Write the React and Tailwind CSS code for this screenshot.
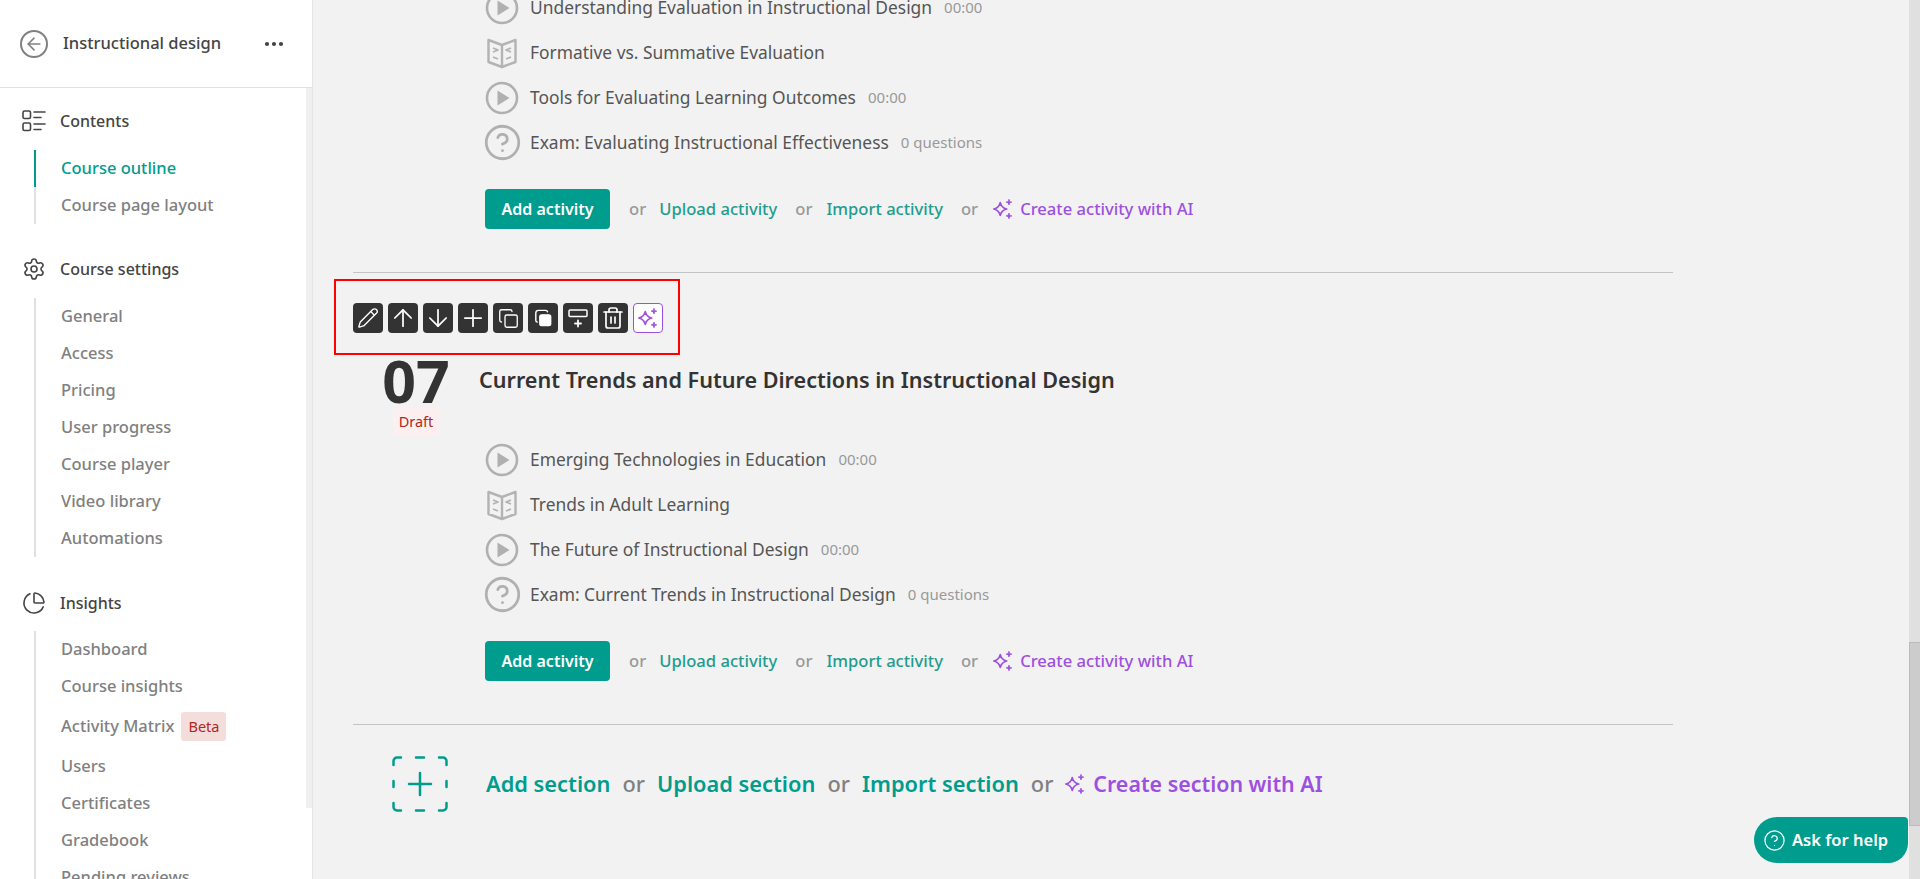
import React from 'react';
import { ArrowUp, ArrowDown, Plus, Pencil, Copy, Trash2, Settings, CircleHelp, ArrowLeft, Ellipsis, ChartPie } from 'lucide-react';

const FONT = 'font-["Noto_Sans",sans-serif]';

const Sparkles = ({ className }) => (
  <svg viewBox="0 0 24 24" className={className} fill="none" stroke="currentColor" strokeWidth="1.9" strokeLinejoin="round">
    <path d="M9 5c1 4.300 2.700 6 7 7-4.300 1-6 2.700-7 7-1-4.300-2.700-6-7-7 4.300-1 6-2.700 7-7z" />
    <path d="M18.500 1.500c.4 1.900 1.100 2.600 3 3-1.900.4-2.600 1.100-3 3-.4-1.900-1.100-2.600-3-3 1.900-.4 2.600-1.100 3-3z" fill="currentColor" strokeWidth="1" />
    <path d="M18.500 16.500c.4 1.900 1.100 2.600 3 3-1.900.4-2.600 1.100-3 3-.4-1.900-1.100-2.600-3-3 1.900-.4 2.600-1.100 3-3z" fill="currentColor" strokeWidth="1" />
  </svg>
);

const ContentsIcon = () => (
  <svg viewBox="0 0 24 24" className="w-6 h-6 text-[#444]" fill="none" stroke="currentColor" strokeWidth="1.6" strokeLinecap="round">
    <rect x="1" y="2" width="7.500" height="7.500" rx="1.500" />
    <rect x="1" y="14" width="7.500" height="7.500" rx="1.500" />
    <path d="M12 3h11M12 8.500h7M12 15h11M12 20.500h7" />
  </svg>
);

const BookIcon = () => (
  <svg viewBox="0 0 32 32" className="w-8 h-8 text-[#b3b3b3]" fill="none" stroke="currentColor" strokeWidth="2.400" strokeLinejoin="round">
    <path d="M16 8 2.500 3v22L16 30l13.500-5V3L16 8zM16 8v22" />
    <path d="m7 11 5 2-5 2M7 20l5 2M25 11l-5 2 5 2M25 20l-5 2" strokeWidth="1.800" />
  </svg>
);

const PlayIcon = () => (
  <svg viewBox="0 0 34 34" className="w-[34px] h-[34px] text-[#b0b0b0]" fill="none" stroke="currentColor" strokeWidth="2.600">
    <circle cx="17" cy="17" r="15" />
    <path d="M12.500 9.500v15l12-7.500z" fill="currentColor" strokeWidth="0" />
  </svg>
);

const DashedAdd = () => (
  <svg viewBox="0 0 56 56" className="w-14 h-14 text-[#009c8d]" fill="none" stroke="currentColor" strokeWidth="2.500" strokeLinecap="round">
    <path d="M1.500 9V5a3.500 3.500 0 0 1 3.500-3.500h4M47 1.500h4A3.500 3.500 0 0 1 54.500 5v4M54.500 47v4a3.500 3.500 0 0 1-3.500 3.500h-4M9 54.500H5A3.500 3.500 0 0 1 1.500 51v-4" />
    <path d="M24 1.500h8M24 54.500h8M1.500 25v6M54.500 25v6M28 17v22M17 28h22" />
  </svg>
);

const SideHeading = ({ icon, label }) => (
  <div className="flex items-center gap-3.5 h-7 pl-[22px] text-[16px] font-medium text-[#444]">
    <span className="flex w-6 justify-center">{icon}</span>
    {label}
  </div>
);

const SideLink = ({ label, active }) => (
  <div className={`flex items-center h-[37px] pl-[25px] border-l-2 text-[16.500px] font-medium ${active ? 'border-[#009c8d] text-[#009c8d]' : 'border-[#e0e0e0] text-[#808080]'}`}>
    {label}
  </div>
);

const Sidebar = () => (
  <aside className="w-[313px] shrink-0 h-full bg-white border-r border-[#e4e4e4] overflow-hidden flex flex-col">
    <div className="h-[88px] shrink-0 flex items-center pl-[20px] pr-[26px] border-b border-[#e0e0e0]">
      <span className="flex w-[28px] h-[28px] items-center justify-center rounded-full border-2 border-[#808080] text-[#808080]">
        <ArrowLeft className="w-[20px] h-[20px]" strokeWidth={1.900} />
      </span>
      <span className="ml-[15px] text-[16.500px] font-medium text-[#444]">Instructional design</span>
      <Ellipsis className="ml-auto w-6 h-6 text-[#444]" strokeWidth={2.200} />
    </div>
    <div className="flex-1 relative pt-[19px]">
      <div className="absolute right-0 top-0 w-[6px] h-[720px] bg-[#f0f0f0]" />
      <SideHeading icon={<ContentsIcon />} label="Contents" />
      <div className="ml-[34px] mt-[15px]">
        <SideLink label="Course outline" active />
        <SideLink label="Course page layout" />
      </div>
      <div className="mt-[31px]"><SideHeading icon={<Settings className="w-6 h-6" strokeWidth={1.600} />} label="Course settings" /></div>
      <div className="ml-[34px] mt-[15px]">
        {['General', 'Access', 'Pricing', 'User progress', 'Course player', 'Video library', 'Automations'].map((l) => <SideLink key={l} label={l} />)}
      </div>
      <div className="mt-[32px]"><SideHeading icon={<ChartPie className="w-6 h-6" strokeWidth={1.600} />} label="Insights" /></div>
      <div className="ml-[34px] mt-[14px]">
        <SideLink label="Dashboard" />
        <SideLink label="Course insights" />
        <div className="h-[43px] flex items-center pl-[25px] border-l-2 border-[#e0e0e0] text-[16.500px] font-medium text-[#808080]">
          Activity Matrix
          <span className="ml-[7px] px-[7px] h-[29px] flex items-center rounded-[3px] bg-[#f3dedc] text-[#b3261e] text-[14.500px] font-normal">Beta</span>
        </div>
        <SideLink label="Users" />
        <SideLink label="Certificates" />
        <SideLink label="Gradebook" />
        <SideLink label="Pending reviews" />
      </div>
    </div>
  </aside>
);

const Row = ({ type, title, meta }) => (
  <div className="flex items-center h-[45px]">
    <span className="flex w-[34px] h-[34px] shrink-0 items-center justify-center">
      {type === 'video' && <PlayIcon />}
      {type === 'book' && <BookIcon />}
      {type === 'exam' && <CircleHelp className="w-[39px] h-[39px] shrink-0 text-[#b0b0b0]" strokeWidth={1.700} />}
    </span>
    <span className="ml-[11px] text-[17.400px] text-[#555]">{title}</span>
    {meta && <span className="ml-[12px] text-[15px] text-[#999]">{meta}</span>}
  </div>
);

const ActivityActions = () => (
  <div className="flex items-center mt-[24px] text-[16.600px] font-medium">
    <button className="w-[125px] h-10 rounded-[4px] bg-[#009c8d] text-white text-[16px] font-semibold">Add activity</button>
    <span className="ml-[19px] text-[#999]">or</span>
    <span className="ml-[13px] text-[#1e9d8f]">Upload activity</span>
    <span className="ml-[18px] text-[#999]">or</span>
    <span className="ml-[14px] text-[#1e9d8f]">Import activity</span>
    <span className="ml-[18px] text-[#999]">or</span>
    <Sparkles className="ml-[14px] w-[22px] h-[22px] text-[#9d50e0]" />
    <span className="ml-[6px] text-[#9d50e0]">Create activity with AI</span>
  </div>
);

const ToolBtn = ({ children }) => (
  <span className="flex w-[30px] h-[30px] items-center justify-center rounded-[4px] bg-[#333] text-white">{children}</span>
);

const Toolbar = () => (
  <div className="relative flex gap-[5px] h-[30px]">
    <div className="absolute -left-[19px] -top-[24px] w-[346px] h-[76px] border-2 border-[#ff0000]" />
    <ToolBtn><Pencil className="w-[22px] h-[22px]" strokeWidth={1.500} /></ToolBtn>
    <ToolBtn><ArrowUp className="w-7 h-7" strokeWidth={1.500} /></ToolBtn>
    <ToolBtn><ArrowDown className="w-7 h-7" strokeWidth={1.500} /></ToolBtn>
    <ToolBtn><Plus className="w-7 h-7" strokeWidth={1.500} /></ToolBtn>
    <ToolBtn><Copy className="w-[21px] h-[21px]" strokeWidth={1.500} /></ToolBtn>
    <ToolBtn>
      <svg viewBox="0 0 20 20" className="w-[18px] h-[18px]" fill="none" stroke="currentColor" strokeWidth="1.600">
        <rect x="6.500" y="6.500" width="12" height="12" rx="2" fill="currentColor" />
        <path d="M3.500 14.500A2 2 0 0 1 2 12.500v-8a3 3 0 0 1 3-3h8a2 2 0 0 1 2 1.500" strokeLinecap="round" />
      </svg>
    </ToolBtn>
    <ToolBtn>
      <svg viewBox="0 0 20 20" className="w-5 h-5" fill="none" stroke="currentColor" strokeWidth="1.500" strokeLinecap="round">
        <rect x="1" y="2" width="18" height="6.500" rx="1" />
        <path d="M10 12.500v6M7 15.500h6" strokeWidth="1.800" />
      </svg>
    </ToolBtn>
    <ToolBtn><Trash2 className="w-6 h-6" strokeWidth={1.700} /></ToolBtn>
    <span className="flex w-[30px] h-[30px] items-center justify-center rounded-[4px] bg-white border border-[#9d50e0] text-[#9d50e0]">
      <Sparkles className="w-[22px] h-[22px]" />
    </span>
  </div>
);

export default function App() {
  return (
    <div className={`${FONT} flex w-full h-[879px] overflow-hidden bg-[#f2f2f2]`}>
      <Sidebar />
      <main className="relative flex-1 overflow-hidden">
        <div className="ml-[40px] w-[1320px] -mt-[15px]">
          <div className="pl-[132px]">
            <Row type="video" title="Understanding Evaluation in Instructional Design" meta="00:00" />
            <Row type="book" title="Formative vs. Summative Evaluation" />
            <Row type="video" title="Tools for Evaluating Learning Outcomes" meta="00:00" />
            <Row type="exam" title="Exam: Evaluating Instructional Effectiveness" meta="0 questions" />
            <ActivityActions />
          </div>
          <div className="mt-[43px] border-t border-[#c4c4c4] pt-[30px]">
            <Toolbar />
            <div className="flex mt-[22px]">
              <div className="w-[126px] flex flex-col items-center">
                <span className="text-[59px] leading-[50px] font-bold text-[#333]">07</span>
                <span className="mt-[3px] w-[47px] h-[27px] flex items-center justify-center rounded-[3px] bg-[#fbf0ef] text-[#b3261e] text-[14.500px]">Draft</span>
              </div>
              <h2 className="text-[21.600px] font-semibold text-[#333] leading-[50px]">Current Trends and Future Directions in Instructional Design</h2>
            </div>
            <div className="pl-[132px] mt-[2px]">
              <Row type="video" title="Emerging Technologies in Education" meta="00:00" />
              <Row type="book" title="Trends in Adult Learning" />
              <Row type="video" title="The Future of Instructional Design" meta="00:00" />
              <Row type="exam" title="Exam: Current Trends in Instructional Design" meta="0 questions" />
              <ActivityActions />
            </div>
          </div>
          <div className="mt-[43px] border-t border-[#c4c4c4] pt-[31px] flex items-center pl-[39px] text-[21.800px] font-semibold">
            <DashedAdd />
            <span className="ml-[38px] text-[#009c8d]">Add section</span>
            <span className="ml-[12px] text-[#808080] font-medium">or</span>
            <span className="ml-[12px] text-[#009c8d]">Upload section</span>
            <span className="ml-[12px] text-[#808080] font-medium">or</span>
            <span className="ml-[12px] text-[#009c8d]">Import section</span>
            <span className="ml-[12px] text-[#808080] font-medium">or</span>
            <Sparkles className="ml-[11px] w-[22px] h-[22px] text-[#9d50e0]" />
            <span className="ml-[7px] text-[21.400px] text-[#9d50e0]">Create section with AI</span>
          </div>
        </div>
        <button className="absolute right-[12px] top-[817px] w-[154px] h-[46px] rounded-l-[23px] rounded-tr-[4px] rounded-br-[20px] bg-[#009c8d] text-white flex items-center pl-[9px] gap-[6px] text-[16.500px] font-semibold">
          <CircleHelp className="w-[23px] h-[23px]" strokeWidth={1.300} />
          Ask for help
        </button>
        <div className="absolute right-0 top-0 w-[11px] h-full bg-[#e0e0e0]">
          <div className="mt-[642px] h-[184px] bg-[#cccccc] border border-r-0 border-[#bbbbbb]" />
        </div>
      </main>
    </div>
  );
}
